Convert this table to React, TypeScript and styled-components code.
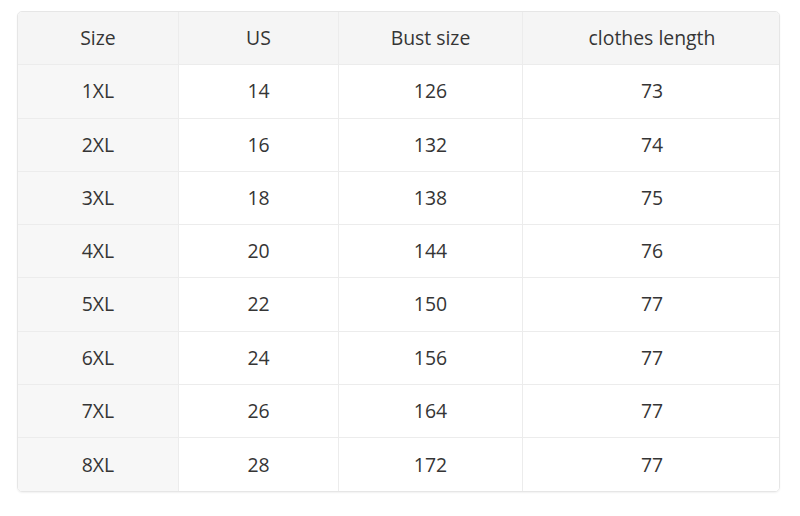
import React from "react";
import styled, { createGlobalStyle } from "styled-components";

const Global = createGlobalStyle`
  html, body { margin: 0; padding: 0; background: #ffffff; }
  body { font-family: "Open Sans", "Noto Sans", sans-serif; }
`;

const Page = styled.div`
  width: 800px;
  height: 516px;
  box-sizing: border-box;
  padding: 11px 20px 0 17px;
`;

const Table = styled.div`
  display: grid;
  grid-template-columns: 161px 160px 184px 258px;
  grid-auto-rows: 53.25px;
  width: 763px;
  border: 1px solid #e6e6e6;
  border-radius: 5px;
  overflow: hidden;
  box-sizing: border-box;
  box-shadow: 0 1px 2px rgba(0, 0, 0, 0.06);
`;

const Cell = styled.div<{ $head?: boolean; $first?: boolean; $last?: boolean; $bottom?: boolean }>`
  display: flex;
  align-items: center;
  justify-content: center;
  font-size: 19.4px;
  color: #353535;
  background: ${(p) => (p.$head ? "#f5f5f5" : p.$first ? "#f7f7f7" : "#ffffff")};
  border-right: ${(p) => (p.$last ? "none" : "1px solid #ececec")};
  border-bottom: ${(p) => (p.$bottom ? "none" : "1px solid #ececec")};
  padding-bottom: 1px;
`;

const headers = ["Size", "US", "Bust size", "clothes length"];
const rows = [
  ["1XL", "14", "126", "73"],
  ["2XL", "16", "132", "74"],
  ["3XL", "18", "138", "75"],
  ["4XL", "20", "144", "76"],
  ["5XL", "22", "150", "77"],
  ["6XL", "24", "156", "77"],
  ["7XL", "26", "164", "77"],
  ["8XL", "28", "172", "77"],
];

export default function App() {
  return (
    <Page>
      <Global />
      <Table>
        {headers.map((h, i) => (
          <Cell key={h} $head $last={i === 3}>
            {h}
          </Cell>
        ))}
        {rows.map((r, ri) =>
          r.map((c, ci) => (
            <Cell
              key={`${ri}-${ci}`}
              $first={ci === 0}
              $last={ci === 3}
              $bottom={ri === rows.length - 1}
            >
              {c}
            </Cell>
          ))
        )}
      </Table>
    </Page>
  );
}
